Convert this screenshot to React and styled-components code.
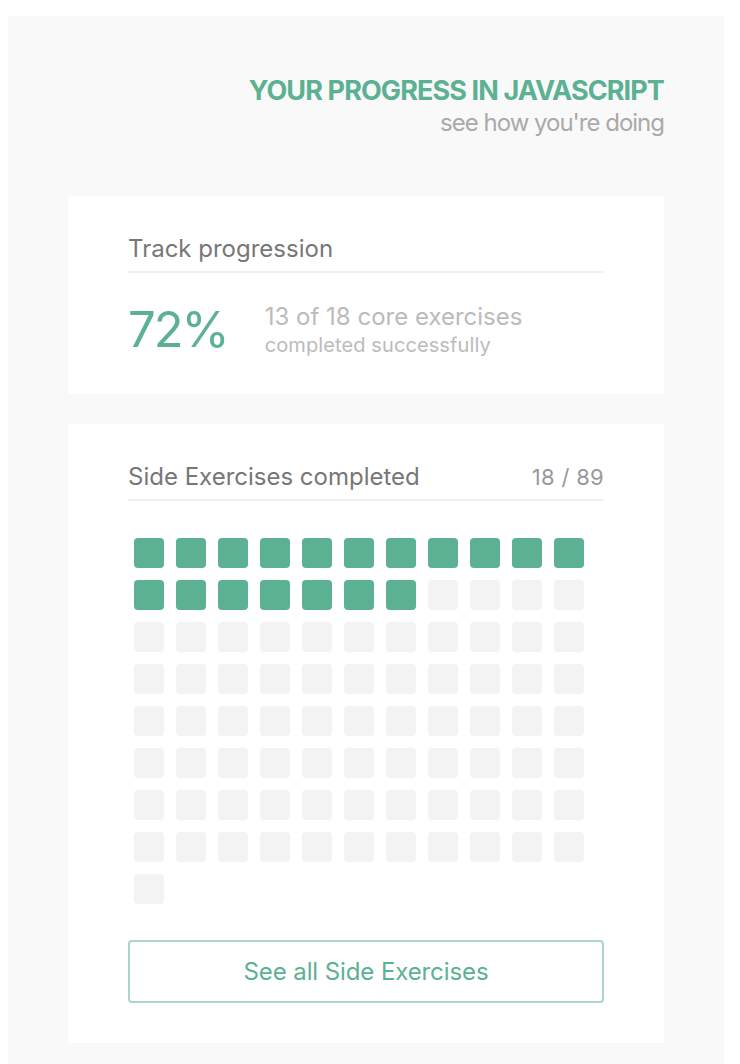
import React from 'react'
import styled, { createGlobalStyle } from 'styled-components'

const GlobalStyle = createGlobalStyle`
  body {
    margin: 0;
    background: #fff;
    font-family: Inter, Roboto, "Liberation Sans", sans-serif;
  }
`

const Page = styled.div`
  padding: 16px 16px 0 8px;
`

const Panel = styled.section`
  background: #f9f9f9;
  border-radius: 4px 4px 0 0;
  padding: 58px 60px 40px;
  min-height: 1000px;
`

const Header = styled.header`
  text-align: right;
  margin-bottom: 58px;
`

const Title = styled.h1`
  margin: 0;
  font-size: 27px;
  line-height: 34px;
  font-weight: 700;
  letter-spacing: -0.9px;
  color: #5cb192;
`

const Subtitle = styled.p`
  margin: 0;
  font-size: 24px;
  line-height: 30px;
  letter-spacing: -1px;
  color: #aaa;
`

const Card = styled.div`
  background: #fff;
  padding: ${props => props.compact ? '40px 60px 33px' : '40px 60px'};
  & + & {
    margin-top: 30px;
  }
`

const CardHead = styled.div`
  display: flex;
  justify-content: space-between;
  align-items: baseline;
  padding-bottom: 9px;
  border-bottom: 2px solid #f0f0f0;
`

const CardTitle = styled.h2`
  margin: 0;
  font-size: 24px;
  line-height: 26px;
  font-weight: 400;
  letter-spacing: 0;
  color: #777;
`

const Count = styled.span`
  font-size: 22px;
  color: #999;
  letter-spacing: 0.3px;
`

const Stats = styled.div`
  display: flex;
  align-items: center;
  gap: 37px;
  padding-top: 26px;
`

const Percent = styled.div`
  font-size: 49px;
  line-height: 62px;
  letter-spacing: -2px;
  color: #5cb192;
`

const StatText = styled.div`
  color: #bbb;
`

const StatMain = styled.div`
  font-size: 24px;
  line-height: 30px;
  letter-spacing: 0;
`

const StatSub = styled.div`
  font-size: 20px;
  line-height: 26px;
  letter-spacing: 0.1px;
`

const Grid = styled.div`
  display: flex;
  flex-wrap: wrap;
  width: 462px;
  margin-top: 31px;
`

const Cell = styled.div`
  width: 30px;
  height: 30px;
  margin: 6px;
  border-radius: 4px;
  background: ${props => props.done ? '#5cb192' : '#f3f3f3'};
`

const Button = styled.button`
  display: block;
  width: 100%;
  height: 63px;
  margin-top: 30px;
  background: #fff;
  border: 2px solid #aad7c6;
  border-radius: 4px;
  font-family: inherit;
  font-size: 24px;
  letter-spacing: -0.1px;
  color: #5cb192;
  cursor: pointer;
`

const total = 89
const done = 18

const App = () => (
  <Page>
    <GlobalStyle />
    <Panel>
      <Header>
        <Title>YOUR PROGRESS IN JAVASCRIPT</Title>
        <Subtitle>see how you're doing</Subtitle>
      </Header>
      <Card compact>
        <CardHead>
          <CardTitle>Track progression</CardTitle>
        </CardHead>
        <Stats>
          <Percent>72%</Percent>
          <StatText>
            <StatMain>13 of 18 core exercises</StatMain>
            <StatSub>completed successfully</StatSub>
          </StatText>
        </Stats>
      </Card>
      <Card>
        <CardHead>
          <CardTitle>Side Exercises completed</CardTitle>
          <Count>{done} / {total}</Count>
        </CardHead>
        <Grid>
          {Array.from({ length: total }, (_, i) => (
            <Cell key={i} done={i < done} />
          ))}
        </Grid>
        <Button>See all Side Exercises</Button>
      </Card>
    </Panel>
  </Page>
)

export default App
